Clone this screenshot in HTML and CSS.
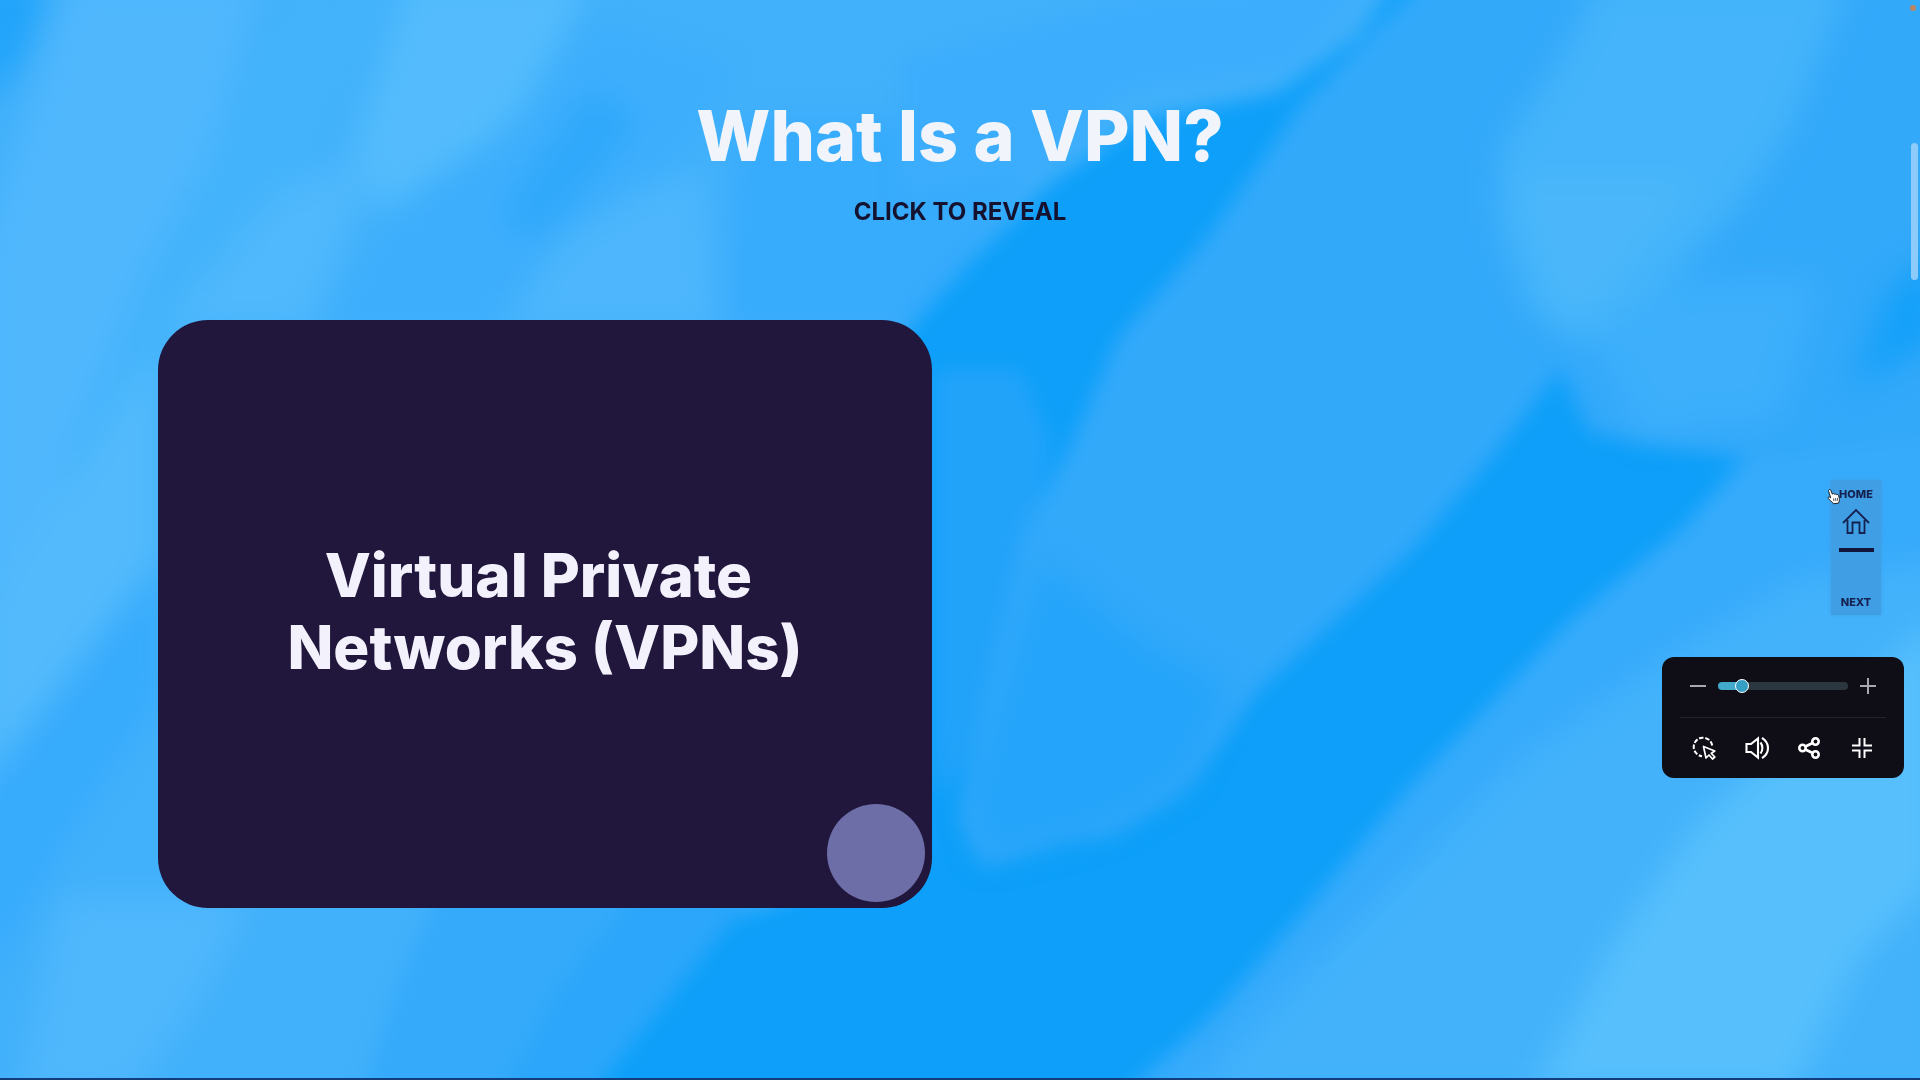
FILE: index.html
```html
<!DOCTYPE html>
<html lang="en">
<head>
<meta charset="utf-8">
<meta name="viewport" content="width=device-width, initial-scale=1">
<title>What Is a VPN?</title>
<link rel="stylesheet" href="styles.css">
</head>
<body>
<svg class="backdrop" viewBox="0 0 1920 1080" preserveAspectRatio="none" aria-hidden="true">
  <defs>
    <filter id="soft" x="-20%" y="-20%" width="140%" height="140%" color-interpolation-filters="sRGB"><feGaussianBlur stdDeviation="10"/></filter>
    <filter id="softer" x="-20%" y="-20%" width="140%" height="140%" color-interpolation-filters="sRGB"><feGaussianBlur stdDeviation="16"/></filter>
  </defs>
  <rect width="1920" height="1080" fill="#42b1fb"/>
  <!-- pale strokes on the left -->
  <g filter="url(#softer)">
    <path fill="#50b7fd" d="M70-20H260L215 140 160 270 100 420 40 560-20 640V260Z"/>
    <path fill="#43b3fb" d="M290-20H400L300 190 200 330 110 480 30 640 60 480 150 260 220 140Z"/>
    <path fill="#54bcfc" d="M410-20H590L520 110 400 230 350 160Z"/>
    <path fill="#3daefc" d="M590 20 740 60 700 140 560 290 520 330H320L400 200 520 120Z"/>
    <path fill="#2fa8fb" d="M590 90 640 120 540 240 500 220Z"/>
    <path fill="#50b8fc" d="M280 190 380 150 310 330 160 330Z"/>
    <path fill="#4db6fc" d="M640 190 700 170 720 330H500L560 240Z"/>
    <path fill="#37abfc" d="M740 120 1060 120 940 330H720L730 240Z"/>
    <path fill="#53bafc" d="M160 340V560L60 720-20 790V620L70 480Z"/>
    <path fill="#37abfc" d="M160 560V700L80 820-20 1000V790L60 690Z"/>
    <path fill="#4fb7fc" d="M60 900H250L200 1000 130 1100H20Z"/>
    <path fill="#1fa3fa" d="M-20-20H50L20 60-20 110Z"/>
  </g>
  <g filter="url(#soft)">
    <path fill="#35aafa" d="M440 890H760L560 1100H360L400 980Z"/>
    <path fill="#2ba6fa" d="M640 890H760L580 1100H500L560 990Z"/>
    <path fill="#3cadfc" d="M900 60 1130 0 1370-20 1290 70 1130 90 1040 170 900 200Z"/>
    <!-- deep valley running from the top right to the bottom left -->
    <path fill="#0d9ff9" d="M1395-20 1360 34 1278 93 1144 120 1050 183 970 262 900 340V860L735 919 585 1100H1130L1220 1040 1620 640 1760 450 1590 434 1560 340 1460 380 1100 400 1205 241 1303 103 1425-20Z"/>
    <path fill="#22a3fa" d="M935 370 1020 370 1050 440 1030 560 970 760 935 800Z"/>
    <!-- central petal -->
    <path fill="#33a9fa" d="M1430-20H1950V560L1737 458 1590 434 1560 370 1490 460 1413 550 1260 690 1185 790 1113 835 1060 840 984 867 960 820 1000 640 1021 540 1070 448 1119 337 1205 241 1303 103Z"/>
    <!-- right bank -->
    <path fill="#37abfb" d="M1950 440 1740 465 1682 530 1572 620 1413 785 1303 915 1210 1020 1119 1100H1950Z"/>
  </g>
  <g filter="url(#softer)">
    <path fill="#24a4fa" d="M1040 560 1140 640 1230 690 1185 780 1113 825 984 860 970 800Z"/>
    <path fill="#43b2fb" d="M1950 560 1800 580 1680 650 1520 760 1400 880 1310 970 1190 1100H1950Z"/>
    <path fill="#45b4fa" d="M1600-20H1850L1790 130 1735 210 1650 300 1580 345 1530 310 1500 230 1500 150 1560 60Z"/>
    <path fill="#4bb7fa" d="M1510 180 1700 180 1600 300 1560 330Z"/>
    <path fill="#3dafFb" d="M1590 340 1680 280 1820 280 1780 420 1640 435Z"/>
    <path fill="#14a0f9" d="M1940 250 1890 290 1850 390 1940 340Z"/>
    <path fill="#56bffc" d="M1700 820 1790 740 1940 620V880L1860 960 1790 1100H1530L1610 950Z"/>
  </g>
</svg>

<main class="slide">
  <header class="heading">
    <h1 class="heading-title">What Is a VPN?</h1>
    <p class="heading-hint">CLICK TO REVEAL</p>
  </header>
  <button class="card" type="button">
    <span class="card-title">Virtual Private&nbsp;<br>Networks (VPNs)</span>
    <span class="card-dot"></span>
  </button>
</main>

<nav class="side-nav" aria-label="Slides">
  <a class="side-link" href="#home">HOME
    <svg class="house" viewBox="0 0 28 26" fill="none" stroke="currentColor" stroke-width="1.8" aria-hidden="true"><path d="M1 15 14 2 27 15M5.500 12V25H10.500V14.500H17.500V25H22.500V12"/></svg>
  </a>
  <span class="side-bar"></span>
  <a class="side-link" href="#next">NEXT</a>
</nav>

<svg class="pointer" viewBox="0 0 15 17" aria-hidden="true"><path fill="#fff" stroke="#111" stroke-width="1" d="M2.200 1.200C3 .7 3.800 1 4.100 1.800L5.700 6C6.200 5.200 7.400 5.200 7.800 6.100 8.500 5.400 9.700 5.600 10 6.500 10.900 6 12 6.400 12.300 7.400L13.200 10.500C13.600 12.500 12.900 13.600 12.500 15.600L7 16.300C6.400 14.800 5 14.200 3.400 12.700L1.300 10.600C.6 9.700 1.700 8.500 2.900 9.200L4 10 1.700 2.700C1.500 2.100 1.700 1.500 2.200 1.200Z"/><path stroke="#111" stroke-width=".8" d="M7 10.500 7.500 13.500M9 10.300 9.500 13.300M11 10 11.300 13"/></svg>

<section class="panel" aria-label="View controls">
  <div class="zoom-row">
    <button class="icon-button" type="button" aria-label="Zoom out"><svg class="sign" viewBox="0 0 16 16" stroke="currentColor" stroke-width="2"><path d="M0 8H16"/></svg></button>
    <input class="slider" type="range" min="0" max="100" value="15" aria-label="Zoom level">
    <button class="icon-button" type="button" aria-label="Zoom in"><svg class="sign" viewBox="0 0 16 16" stroke="currentColor" stroke-width="2"><path d="M0 8H16M8 0V16"/></svg></button>
  </div>
  <div class="tool-row">
    <button class="icon-button" type="button" aria-label="Highlight clicks"><svg class="tool" viewBox="0 0 24 24" fill="none" stroke="currentColor" stroke-width="2"><path stroke-dasharray="4.500 1.800" d="M20.200 9.500A9.300 9.300 0 1 0 10 20.200"/><path stroke-width="1.700" stroke-linejoin="round" d="M11.500 10.500 14 22 17 19 20.500 23 22.800 21 19.300 17.300 22.800 15Z"/></svg></button>
    <button class="icon-button" type="button" aria-label="Sound"><svg class="tool" viewBox="0 0 24 24" fill="none" stroke="currentColor" stroke-width="2.100"><path d="M1.500 8H6L13 2.500V21.500L6 16H1.500ZM15.500 6.500C18 9.500 18 14.500 15.500 17.500M17 1.800C25 7 25 17 17 22.200M1.500 7V17"/></svg></button>
    <button class="icon-button" type="button" aria-label="Share"><svg class="tool" viewBox="0 0 24 24" fill="none" stroke="currentColor" stroke-width="2.600"><circle cx="5.500" cy="12" r="3.200"/><circle cx="18.500" cy="5.500" r="3.200"/><circle cx="18.500" cy="18.500" r="3.200"/><path d="M8.400 10.500 15.600 7M8.400 13.500 15.600 17"/></svg></button>
    <button class="icon-button" type="button" aria-label="Exit full screen"><svg class="tool" viewBox="0 0 24 24" fill="none" stroke="currentColor" stroke-width="2"><path d="M2 9.500H9.500V2M14.500 2V9.500H22M2 14.500H9.500V22M22 14.500H14.500V22"/></svg></button>
  </div>
</section>

<span class="scroll-thumb"></span>
<span class="record-dot"></span>
</body>
</html>
```
FILE: styles.css
```css
* {
  box-sizing: border-box;
}

body {
  margin: 0;
  min-height: 100vh;
  border-bottom: 2px solid #123c7c;
  background: #42b1fb;
  font-family: Inter, "Liberation Sans", sans-serif;
  color: #14122e;
}

button {
  padding: 0;
  border: 0;
  background: none;
  font: inherit;
  color: inherit;
  cursor: pointer;
}

.backdrop {
  position: fixed;
  inset: 0;
  z-index: -1;
  width: 100%;
  height: calc(100% - 2px);
}

.slide {
  display: flex;
  flex-direction: column;
  gap: 92px;
  padding: 92px 158px 0;
}

.heading {
  display: flex;
  flex-direction: column;
  gap: 16px;
  text-align: center;
}

.heading-title {
  margin: 0;
  font-size: 70px;
  font-weight: 800;
  line-height: 88px;
  color: #f1f5fb;
}

.heading-hint {
  margin: 0;
  font-size: 24px;
  font-weight: 700;
  line-height: 32px;
}

.card {
  position: relative;
  display: grid;
  place-items: center;
  width: 774px;
  max-width: 100%;
  min-height: 588px;
  padding-bottom: 6px;
  border-radius: 50px;
  background: #21173d;
}

.card-title {
  font-size: 60px;
  font-weight: 800;
  line-height: 72px;
  color: #f3f2fc;
}

.card-dot {
  position: absolute;
  right: 7px;
  bottom: 6px;
  width: 98px;
  height: 98px;
  border-radius: 50%;
  background: #6d6da8;
}

.side-nav {
  position: fixed;
  top: 480px;
  right: 39px;
  display: flex;
  flex-direction: column;
  align-items: center;
  width: 50px;
  padding: 8px 0 6px;
  background: #409fe4;
  box-shadow: 0 0 4px #409fe4;
}

.side-link {
  display: flex;
  flex-direction: column;
  align-items: center;
  gap: 7px;
  font-size: 11px;
  font-weight: 800;
  line-height: 13px;
  color: #152150;
  text-decoration: none;
}

.house {
  width: 28px;
  height: 26px;
}

.side-bar {
  width: 35px;
  height: 4px;
  margin: 14px 0 44px;
  background: #12143a;
}

.pointer {
  position: fixed;
  top: 488px;
  right: 79px;
  width: 14px;
  height: 17px;
}

.panel {
  position: fixed;
  top: 657px;
  right: 16px;
  width: 242px;
  padding: 16px 18px;
  border-radius: 12px;
  background: #0f0d15;
}

.zoom-row {
  display: flex;
  align-items: center;
  justify-content: space-between;
  height: 45px;
  padding: 0 10px 18px;
  border-bottom: 1px solid #232129;
}

.tool-row {
  display: flex;
  justify-content: space-between;
  padding: 18px 12px 2px;
}

.icon-button {
  display: flex;
  color: #fff;
}

.sign {
  width: 16px;
  height: 16px;
  color: #a9a8ae;
}

.tool {
  width: 24px;
  height: 24px;
}

.slider {
  appearance: none;
  width: 130px;
  height: 8px;
  margin: 0;
  border-radius: 4px;
  background: linear-gradient(to right, #41a9c9 24px, #2b363f 24px);
}

.slider::-webkit-slider-thumb {
  appearance: none;
  width: 14px;
  height: 14px;
  border: 1px solid #fff;
  border-radius: 50%;
  background: #369fc4;
}

.scroll-thumb {
  position: fixed;
  top: 143px;
  right: 2px;
  width: 7px;
  height: 137px;
  border-radius: 4px;
  background: #8dcbfb;
}

.record-dot {
  position: fixed;
  top: 5px;
  right: 4px;
  width: 6px;
  height: 6px;
  border-radius: 50%;
  background: #bd8561;
}
```
